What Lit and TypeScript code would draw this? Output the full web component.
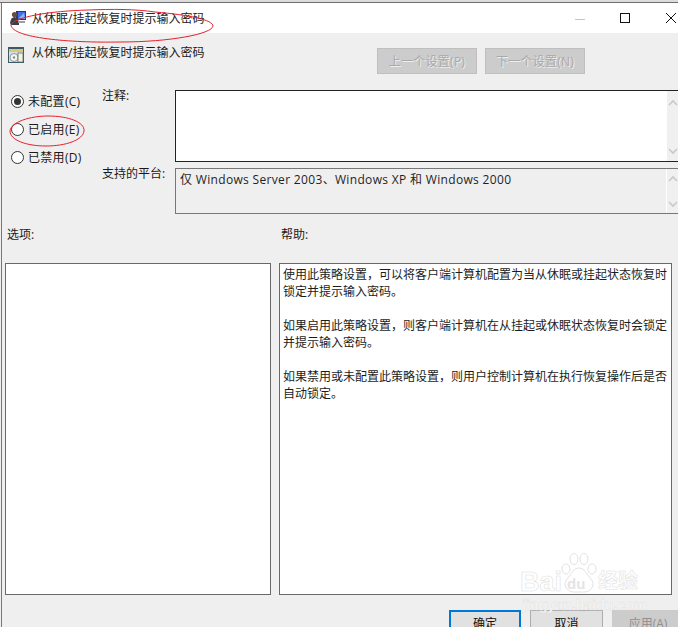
import { LitElement, html, css, svg } from "lit";
import { customElement } from "lit/decorators.js";

const chevUp = svg`<path d="M1 6 L5 2 L9 6" fill="none" stroke="#c9c9c9" stroke-width="1.6"/>`;
const chevDown = svg`<path d="M1 2 L5 6 L9 2" fill="none" stroke="#c9c9c9" stroke-width="1.6"/>`;

@customElement("app-root")
export class AppRoot extends LitElement {
  static styles = css`
    :host { display: block; width: 678px; height: 627px; overflow: hidden; }
    .app { position: relative; width: 678px; height: 627px; overflow: hidden; display: flex; flex-direction: column;
      background: #efefef; color: #1a1a1a; font: 12px/17px "Open Sans", "Noto Sans CJK SC", sans-serif; }
    .top { height: 2px; background: #dcdcdc; border-bottom: 1px solid #6f6f6f; flex: none; }
    .win { flex: 1; display: flex; flex-direction: column; margin-left: 1px; border-left: 1px solid #777; min-height: 0; }
    .titlebar { height: 30px; flex: none; background: #fff; display: flex; align-items: center; padding-left: 8px; }
    .titlebar .t { margin-left: 6px; color: #222; }
    .ctrls { margin-left: auto; display: flex; align-items: center; padding-right: 2px; }
    .ctrls svg { display: block; }
    .min { margin-right: 35px; margin-top: 1px; }
    .max { margin-right: 36px; }
    .subhead { height: 57px; flex: none; display: flex; align-items: flex-start; }
    .sub-title { width: 375px; display: flex; align-items: flex-start; padding: 14px 0 0 6px; box-sizing: border-box; }
    .sub-title span { margin-left: 8px; line-height: 12px; }
    .navs { display: flex; gap: 8px; margin-top: 15px; }
    .nav { width: 100px; height: 26px; box-sizing: border-box; background: #ccc; border: 1px solid #bfbfbf;
      color: #a9a9a9; text-shadow: 1px 1px 0 #eee; display: flex; align-items: center; justify-content: center; letter-spacing: .25px; }
    .config { height: 124px; flex: none; display: grid; grid-template-columns: 100px 73px 520px; grid-template-rows: 72px 46px; row-gap: 6px; }
    .radios { grid-row: 1 / span 2; display: flex; flex-direction: column; gap: 6px; padding-left: 9px; }
    .radio { height: 22px; display: flex; align-items: center; gap: 4px; letter-spacing: .3px; }
    .dot { width: 13px; height: 13px; box-sizing: border-box; border: 1px solid #333; border-radius: 50%; background: #fff; display: flex; align-items: center; justify-content: center; }
    .dot i { width: 7px; height: 7px; border-radius: 50%; background: #333; }
    .lab { line-height: 12px; }
    .lab2 { grid-column: 2; grid-row: 2; }
    .comment { background: #fff; border: 1px solid #222; border-right: 0; display: flex; justify-content: flex-end; padding-right: 17px; box-sizing: border-box; }
    .platform { background: #efefef; border: 1px solid #777; border-right: 0; display: flex; box-sizing: border-box; padding-right: 17px; }
    .platform .txt { flex: 1; padding: 2px 4px; color: #1f1f1f; letter-spacing: .33px; }
    .sb { width: 11px; flex: none; display: flex; flex-direction: column; justify-content: space-between; align-items: center; padding: 6px 0; background: #f0f0f0; box-sizing: border-box; margin-left: auto; }
    .comment .sb { margin-right: 0; padding-top: 8px; padding-bottom: 6px; }
    .platform .sb { border-left: 1px solid #fff; padding-top: 6px; padding-bottom: 5px; width: 12px; }
    .sb svg { display: block; }
    .heads { height: 49px; flex: none; display: grid; grid-template-columns: 274px 1fr; padding: 15px 0 0 5px; box-sizing: border-box; line-height: 12px; }
    .panels { height: 332px; flex: none; display: grid; grid-template-columns: 266px 393px; column-gap: 8px; padding-left: 3px; }
    .box { background: #fff; border: 1px solid #696969; box-sizing: border-box; }
    .help { padding: 1px 3px; white-space: pre-line; color: #1c1c1c; font-family: "Noto Sans CJK SC", sans-serif; overflow: hidden; }
    .foot { display: flex; padding: 15px 0 0 447px; flex: none; height: 32px; box-sizing: border-box; overflow: visible; }
    .btn { width: 72px; height: 26px; flex: none; box-sizing: border-box; background: #e1e1e1; border: 1px solid #adadad; display: flex; align-items: center; justify-content: center; margin-right: 9px; color: #111; }
    .btn.primary { border: 2px solid #0078d7; }
    .btn.off { background: #ccc; border-color: #ccc; color: #8f8f8f; }
    .btn.w73 { width: 73px; }
    .ink { position: absolute; left: 0; top: 0; pointer-events: none; }
    .mark { position: absolute; left: 520px; top: 553px; width: 125px; height: 62px; pointer-events: none; }
    .bai { position: absolute; left: 0; top: 15px; font: 700 27px/28px "Liberation Sans", sans-serif; color: #fff; -webkit-text-stroke: .6px #e2e2e2; }
    .du { position: absolute; left: 47px; top: 23px; font: 700 15px/16px "Liberation Sans", sans-serif; color: #e4e4e4; }
    .jing { position: absolute; left: 78px; top: 15px; font: 700 20px/24px "Noto Sans CJK SC", sans-serif; color: #fff; -webkit-text-stroke: .5px #e0e0e0; }
    .url { position: absolute; left: 2px; top: 44px; font: 700 14px/16px "Liberation Sans", sans-serif; color: #f7f7f7; -webkit-text-stroke: .4px #dedede; letter-spacing: .1px; white-space: nowrap; }
    .paw { position: absolute; left: 40px; top: 0; }
  `;

  render() {
    const help = `使用此策略设置，可以将客户端计算机配置为当从休眠或挂起状态恢复时
锁定并提示输入密码。

如果启用此策略设置，则客户端计算机在从挂起或休眠状态恢复时会锁定
并提示输入密码。

如果禁用或未配置此策略设置，则用户控制计算机在执行恢复操作后是否
自动锁定。`;
    return html`
      <div class="app">
        <div class="top"></div>
        <div class="win">
          <div class="titlebar">
            <svg width="16" height="16" viewBox="0 0 16 16">
              <rect x="6" y="1" width="10" height="9" fill="#27367a"/>
              <rect x="8" y="2" width="7" height="7" fill="#3f6fe0"/>
              <path d="M9 8 L14 3 L15 9Z" fill="#8fb4f0"/>
              <circle cx="4.5" cy="4.5" r="2.6" fill="#6b4b3a"/>
              <path d="M0 13 Q1 7 4.5 7 Q8 7 9 13 L9 15 L1 15Z" fill="#3b4048"/>
              <rect x="8" y="11" width="7" height="2" fill="#9aa0a8"/>
            </svg>
            <span class="t">从休眠/挂起恢复时提示输入密码</span>
            <div class="ctrls">
              <svg class="min" width="10" height="10" viewBox="0 0 10 10"><path d="M0 5.5H10" stroke="#c4c4c4"/></svg>
              <svg class="max" width="10" height="10" viewBox="0 0 10 10"><rect x=".5" y=".5" width="9" height="9" fill="none" stroke="#111"/></svg>
              <svg width="10" height="10" viewBox="0 0 10 10"><path d="M0 0L10 10M10 0L0 10" stroke="#111" fill="none"/></svg>
            </div>
          </div>
          <div class="subhead">
            <div class="sub-title">
              <svg width="16" height="16" viewBox="0 0 16 16">
                <rect x="0" y="0" width="16" height="16" fill="#3d5a66"/>
                <rect x="1" y="2" width="14" height="3" fill="#d8c878"/>
                <rect x="1" y="5" width="14" height="10" fill="#d9dfe2"/>
                <circle cx="6" cy="10.5" r="4" fill="#f4f4f4" stroke="#8a98a0"/>
                <circle cx="6" cy="10.5" r="1.2" fill="#7f8f9a"/>
                <rect x="10" y="6" width="5" height="9" fill="#f7f3d8" stroke="#5d6d75" stroke-width=".8"/>
              </svg>
              <span>从休眠/挂起恢复时提示输入密码</span>
            </div>
            <div class="navs">
              <div class="nav">上一个设置(P)</div>
              <div class="nav">下一个设置(N)</div>
            </div>
          </div>
          <div class="config">
            <div class="radios">
              <div class="radio"><span class="dot"><i></i></span>未配置(C)</div>
              <div class="radio"><span class="dot"></span>已启用(E)</div>
              <div class="radio"><span class="dot"></span>已禁用(D)</div>
            </div>
            <div class="lab">注释:</div>
            <div class="comment">
              <div class="sb">
                <svg width="10" height="8">${chevUp}</svg>
                <svg width="10" height="8">${chevDown}</svg>
              </div>
            </div>
            <div class="lab lab2">支持的平台:</div>
            <div class="platform">
              <div class="txt">仅 Windows Server 2003、Windows XP 和 Windows 2000</div>
              <div class="sb">
                <svg width="10" height="8">${chevUp}</svg>
                <svg width="10" height="8">${chevDown}</svg>
              </div>
            </div>
          </div>
          <div class="heads"><div>选项:</div><div>帮助:</div></div>
          <div class="panels">
            <div class="box"></div>
            <div class="box help">${help}</div>
          </div>
          <div class="foot">
            <div class="btn primary">确定</div>
            <div class="btn w73">取消</div>
            <div class="btn off">应用(A)</div>
          </div>
        </div>

        <div class="mark">
          <svg class="paw" width="38" height="40" viewBox="0 0 38 40">
            <g fill="#fff" stroke="#e2e2e2">
              <ellipse cx="6" cy="16" rx="4" ry="5"/>
              <ellipse cx="14" cy="6" rx="4" ry="5.5"/>
              <ellipse cx="24" cy="6" rx="4" ry="5.5"/>
              <ellipse cx="32" cy="16" rx="4" ry="5"/>
              <path d="M19 15 C13 15 12 21 7 26 C2 32 7 39 14 39 L24 39 C31 39 36 32 31 26 C26 21 25 15 19 15Z"/>
            </g>
          </svg>
          <span class="bai">Bai</span>
          <span class="du">du</span>
          <span class="jing">经验</span>
          <span class="url">jingyan.baidu.com</span>
        </div>

        <svg class="ink" width="678" height="627" viewBox="0 0 678 627" fill="none" stroke="#e8202c" stroke-width="1">
          <path d="M11 25 C14 17 50 11 88 10 C112 9 135 9 155 12 C190 15 213 20 213 26 C212 34 170 42 120 42 C70 43 12 38 11 25Z"/>
          <path d="M10 131 C11 122 30 116 48 116 C68 116 85 122 84 131 C83 140 66 146 46 146 C26 146 10 140 10 131Z"/>
        </svg>
      </div>
    `;
  }
}
